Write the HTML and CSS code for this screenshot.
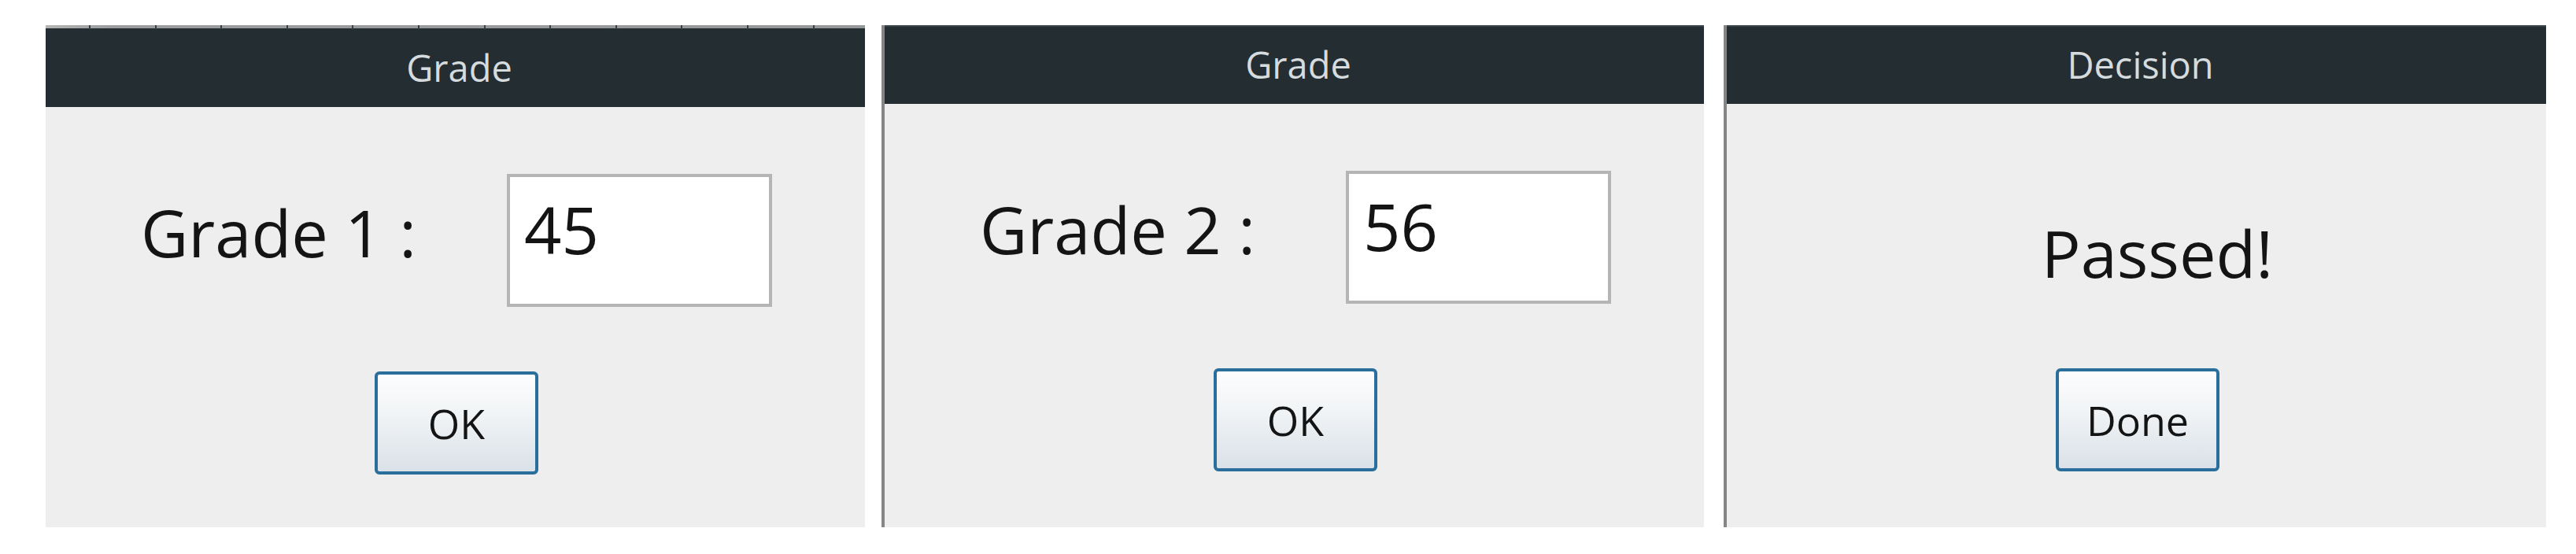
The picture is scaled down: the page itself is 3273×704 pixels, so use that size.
FILE: index.html
```html
<!DOCTYPE html>
<html lang="en">
<head>
<meta charset="utf-8">
<title>Grade dialogs</title>
<link rel="stylesheet" href="styles.css">
</head>
<body>
<main class="desk">
  <section class="dialog">
    <header class="titlebar titlebar--ruled">Grade</header>
    <div class="content">
      <div class="row">
        <span class="label">Grade 1 :</span>
        <div class="field">45</div>
      </div>
      <div class="actions">
        <button class="button" type="button">OK</button>
      </div>
    </div>
  </section>

  <section class="dialog dialog--framed dialog--compact">
    <header class="titlebar">Grade</header>
    <div class="content">
      <div class="row">
        <span class="label">Grade 2 :</span>
        <div class="field">56</div>
      </div>
      <div class="actions">
        <button class="button" type="button">OK</button>
      </div>
    </div>
  </section>

  <section class="dialog dialog--framed dialog--compact dialog--last">
    <header class="titlebar">Decision</header>
    <div class="content">
      <div class="row row--message">
        <p class="message">Passed!</p>
      </div>
      <div class="actions">
        <button class="button" type="button">Done</button>
      </div>
    </div>
  </section>
</main>
</body>
</html>
```

FILE: styles.css
```css
html, body {
  margin: 0;
  padding: 0;
  background: #ffffff;
}

body {
  font-family: "Open Sans", "Noto Sans", "DejaVu Sans", sans-serif;
  color: #141414;
}

.desk {
  display: flex;
  align-items: flex-start;
  gap: 21px;
  padding: 32px 0 0 58px;
}

.dialog {
  flex: none;
  width: 1041px;
  height: 638px;
  background: #eeeeee;
  display: flex;
  flex-direction: column;
}

.dialog--framed {
  border-left: 4px solid #858585;
}

.dialog--last {
  margin-left: 4px;
}

.titlebar {
  box-sizing: border-box;
  height: 100px;
  padding-left: 10px;
  background: #232d32;
  box-shadow: inset 0 2px 0 #3b4549;
  color: #d6dbde;
  font-size: 47px;
  line-height: 47px;
  display: flex;
  align-items: center;
  justify-content: center;
}

.titlebar--ruled {
  height: 104px;
  padding-top: 4px;
  box-shadow: none;
  background:
    repeating-linear-gradient(90deg, transparent 0 55px, #3a3f42 55px 57px, transparent 57px 83.6px) 0 0 / 100% 5px no-repeat,
    linear-gradient(90deg, #b4b4b4, #9a9c9d 8%, #959798) 0 0 / 100% 4px no-repeat,
    #232d32;
}

.content {
  padding-top: 85px;
  display: flex;
  flex-direction: column;
}

.row {
  height: 169px;
  display: flex;
  align-items: flex-start;
  padding-left: 121px;
}

.label {
  width: 465px;
  flex: none;
  margin-top: 32px;
  font-size: 83px;
  line-height: 83px;
  white-space: nowrap;
}

.field {
  box-sizing: border-box;
  width: 337px;
  height: 169px;
  flex: none;
  border: 4px solid #b5b5b5;
  background: #ffffff;
  padding: 24px 0 0 18px;
  font-size: 83px;
  line-height: 83px;
}

.row--message {
  padding-left: 0;
}

.message {
  box-sizing: border-box;
  width: 100%;
  margin: 62px 0 0;
  padding-left: 53px;
  text-align: center;
  font-size: 83px;
  line-height: 83px;
}

.actions {
  margin-top: 82px;
  padding-left: 3px;
  display: flex;
  justify-content: center;
}

.button {
  box-sizing: border-box;
  width: 208px;
  height: 131px;
  padding: 0;
  border: 4px solid #2a6f9c;
  border-radius: 6px;
  background: linear-gradient(#fdfdfe, #f1f4f6 40%, #dae1e8);
  font-family: "Open Sans", "Noto Sans", sans-serif;
  font-size: 52px;
  line-height: 52px;
  color: #141414;
  display: flex;
  align-items: center;
  justify-content: center;
}
```
